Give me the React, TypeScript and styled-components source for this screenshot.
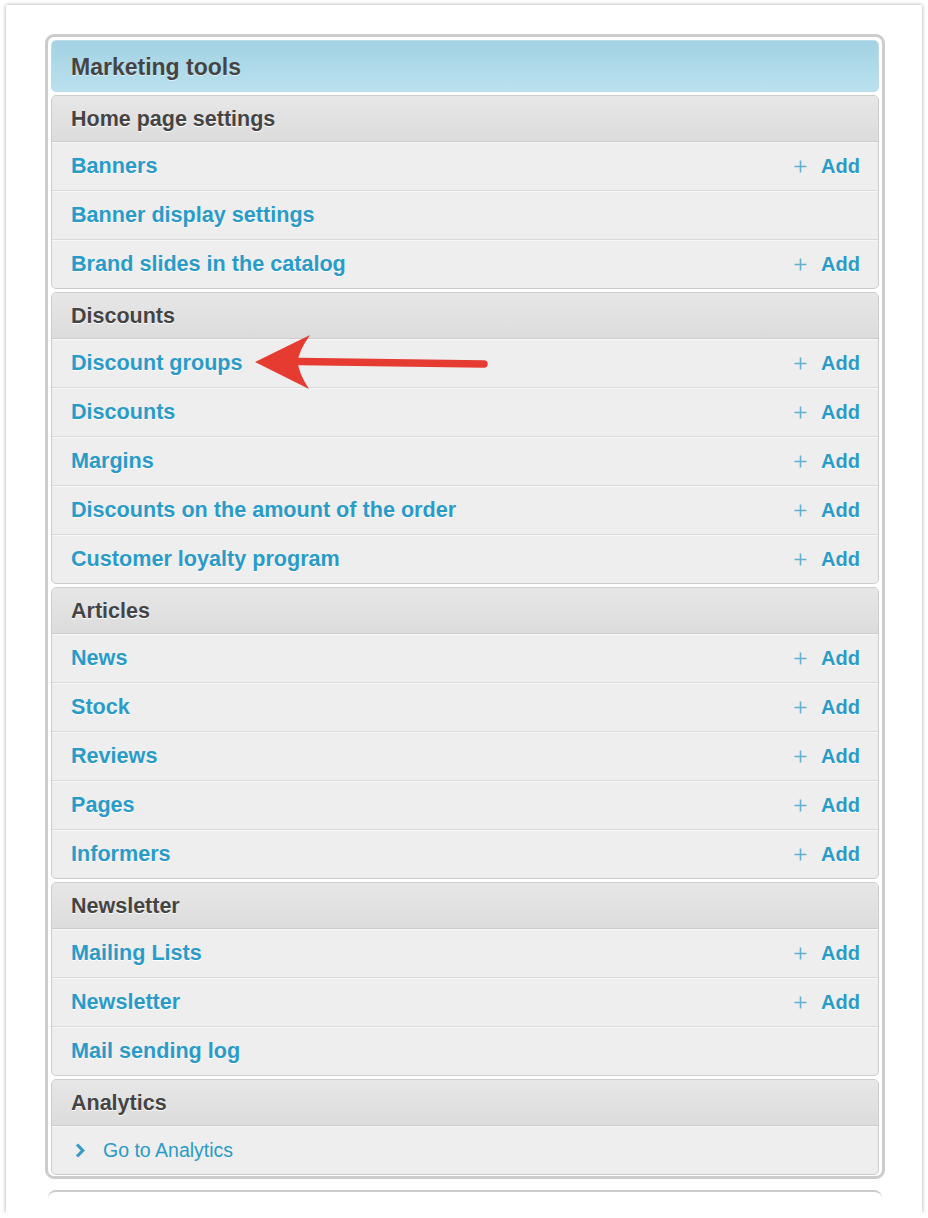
import styled, { createGlobalStyle } from "styled-components";

const GlobalStyle = createGlobalStyle`
    html, body {
        margin: 0;
        padding: 0;
        background: #ffffff;
    }
    body {
        font-family: "Liberation Sans", Arial, Helvetica, sans-serif;
    }
`;

const Card = styled.div`
    position: relative;
    box-sizing: border-box;
    width: 916px;
    height: 1208px;
    margin: 5px 0 0 6px;
    padding: 29px 37px 0 39px;
    background: #ffffff;
    box-shadow: 0 0 4px rgba(0, 0, 0, 0.35);
    overflow: hidden;
`;

const Panel = styled.div`
    display: flex;
    flex-direction: column;
    gap: 3px;
    padding: 3px 3px 1px 3px;
    border: 3px solid #cccccc;
    border-radius: 9px;
    background: #ffffff;
`;

const NextPanel = styled.div`
    height: 6px;
    margin: 11px 3px 0 3px;
    border-top: 2px solid #cccccc;
    border-radius: 8px 8px 0 0;
`;

const MainHeader = styled.div`
    display: flex;
    align-items: center;
    height: 52px;
    padding: 2px 0 0 19px;
    box-sizing: border-box;
    border: 1px solid #bcdce8;
    border-radius: 5px;
    background: linear-gradient(to bottom, #a2d2e3, #bae1ee);
    color: #444444;
    font-size: 23px;
    font-weight: bold;
    text-shadow: 0 1px 0 rgba(255, 255, 255, 0.6);
`;

const Section = styled.div`
    display: flex;
    flex-direction: column;
    border: 1px solid #cccccc;
    border-radius: 5px;
    overflow: hidden;
    background: #eeeeee;
`;

const SectionHeader = styled.div`
    display: flex;
    align-items: center;
    box-sizing: border-box;
    height: 46px;
    padding: 2px 0 0 19px;
    border-bottom: 1px solid #cccccc;
    background: linear-gradient(to bottom, #e7e7e7, #dcdcdc);
    color: #444444;
    font-size: 21.5px;
    font-weight: bold;
    text-shadow: 0 1px 0 #ffffff;
`;

const Row = styled.div`
    display: flex;
    align-items: center;
    justify-content: space-between;
    box-sizing: border-box;
    height: 49px;
    padding: 0 18px 0 19px;
    border-bottom: 1px solid #d9d9d9;
    box-shadow: inset 0 1px 0 #f8f8f8;
    &:last-child {
        border-bottom: none;
        height: 48px;
    }
`;

const Link = styled.a`
    color: #2a9bc6;
    font-size: 21.6px;
    font-weight: bold;
    text-decoration: none;
    text-shadow: 0 1px 0 #ffffff;
    cursor: pointer;
`;

const AddLink = styled.a`
    display: flex;
    align-items: center;
    gap: 14px;
    color: #2a9bc6;
    font-size: 20px;
    font-weight: bold;
    text-decoration: none;
    text-shadow: 0 1px 0 #ffffff;
    cursor: pointer;
`;

const GoLink = styled.a`
    display: flex;
    align-items: center;
    gap: 18px;
    padding-left: 4px;
    color: #2a9bc6;
    font-size: 19.5px;
    text-decoration: none;
    cursor: pointer;
`;

const Pointer = styled.svg`
    position: absolute;
    left: 244px;
    top: 325px;
    pointer-events: none;
`;

interface Item {
    label: string;
    add?: boolean;
}

interface Group {
    title: string;
    items: Item[];
}

const groups: Group[] = [
    {
        title: "Home page settings",
        items: [
            { label: "Banners", add: true },
            { label: "Banner display settings" },
            { label: "Brand slides in the catalog", add: true },
        ],
    },
    {
        title: "Discounts",
        items: [
            { label: "Discount groups", add: true },
            { label: "Discounts", add: true },
            { label: "Margins", add: true },
            { label: "Discounts on the amount of the order", add: true },
            { label: "Customer loyalty program", add: true },
        ],
    },
    {
        title: "Articles",
        items: [
            { label: "News", add: true },
            { label: "Stock", add: true },
            { label: "Reviews", add: true },
            { label: "Pages", add: true },
            { label: "Informers", add: true },
        ],
    },
    {
        title: "Newsletter",
        items: [
            { label: "Mailing Lists", add: true },
            { label: "Newsletter", add: true },
            { label: "Mail sending log" },
        ],
    },
];

function PlusIcon() {
    return (
        <svg width="13" height="13" viewBox="0 0 13 13">
            <path d="M6.5 0.5V12.5M0.5 6.5H12.5" stroke="#62b0cf" strokeWidth="1.6" />
        </svg>
    );
}

function ChevronIcon() {
    return (
        <svg width="10" height="15" viewBox="0 0 10 15">
            <path d="M2 1.5L7.8 7.5L2 13.5" fill="none" stroke="#3a9cc6" strokeWidth="3.2" />
        </svg>
    );
}

function App() {
    return (
        <>
            <GlobalStyle />
            <Card>
                <Panel>
                    <MainHeader>Marketing tools</MainHeader>
                    {groups.map((group) => (
                        <Section key={group.title}>
                            <SectionHeader>{group.title}</SectionHeader>
                            {group.items.map((item) => (
                                <Row key={item.label}>
                                    <Link>{item.label}</Link>
                                    {item.add && (
                                        <AddLink>
                                            <PlusIcon />
                                            Add
                                        </AddLink>
                                    )}
                                </Row>
                            ))}
                        </Section>
                    ))}
                    <Section>
                        <SectionHeader>Analytics</SectionHeader>
                        <Row>
                            <GoLink>
                                <ChevronIcon />
                                Go to Analytics
                            </GoLink>
                        </Row>
                    </Section>
                </Panel>
                <NextPanel />
                {/* annotation arrow over "Discount groups" */}
                <Pointer width="245" height="66" viewBox="0 0 245 66">
                    <line x1="50" y1="31.5" x2="234" y2="34" stroke="#e63b30" strokeWidth="7.5" strokeLinecap="round" />
                    <path d="M5 32 L60 5 Q48 22 48 32 Q48 42 59 59 Z" fill="#e63b30" />
                </Pointer>
            </Card>
        </>
    );
}

export default App;
